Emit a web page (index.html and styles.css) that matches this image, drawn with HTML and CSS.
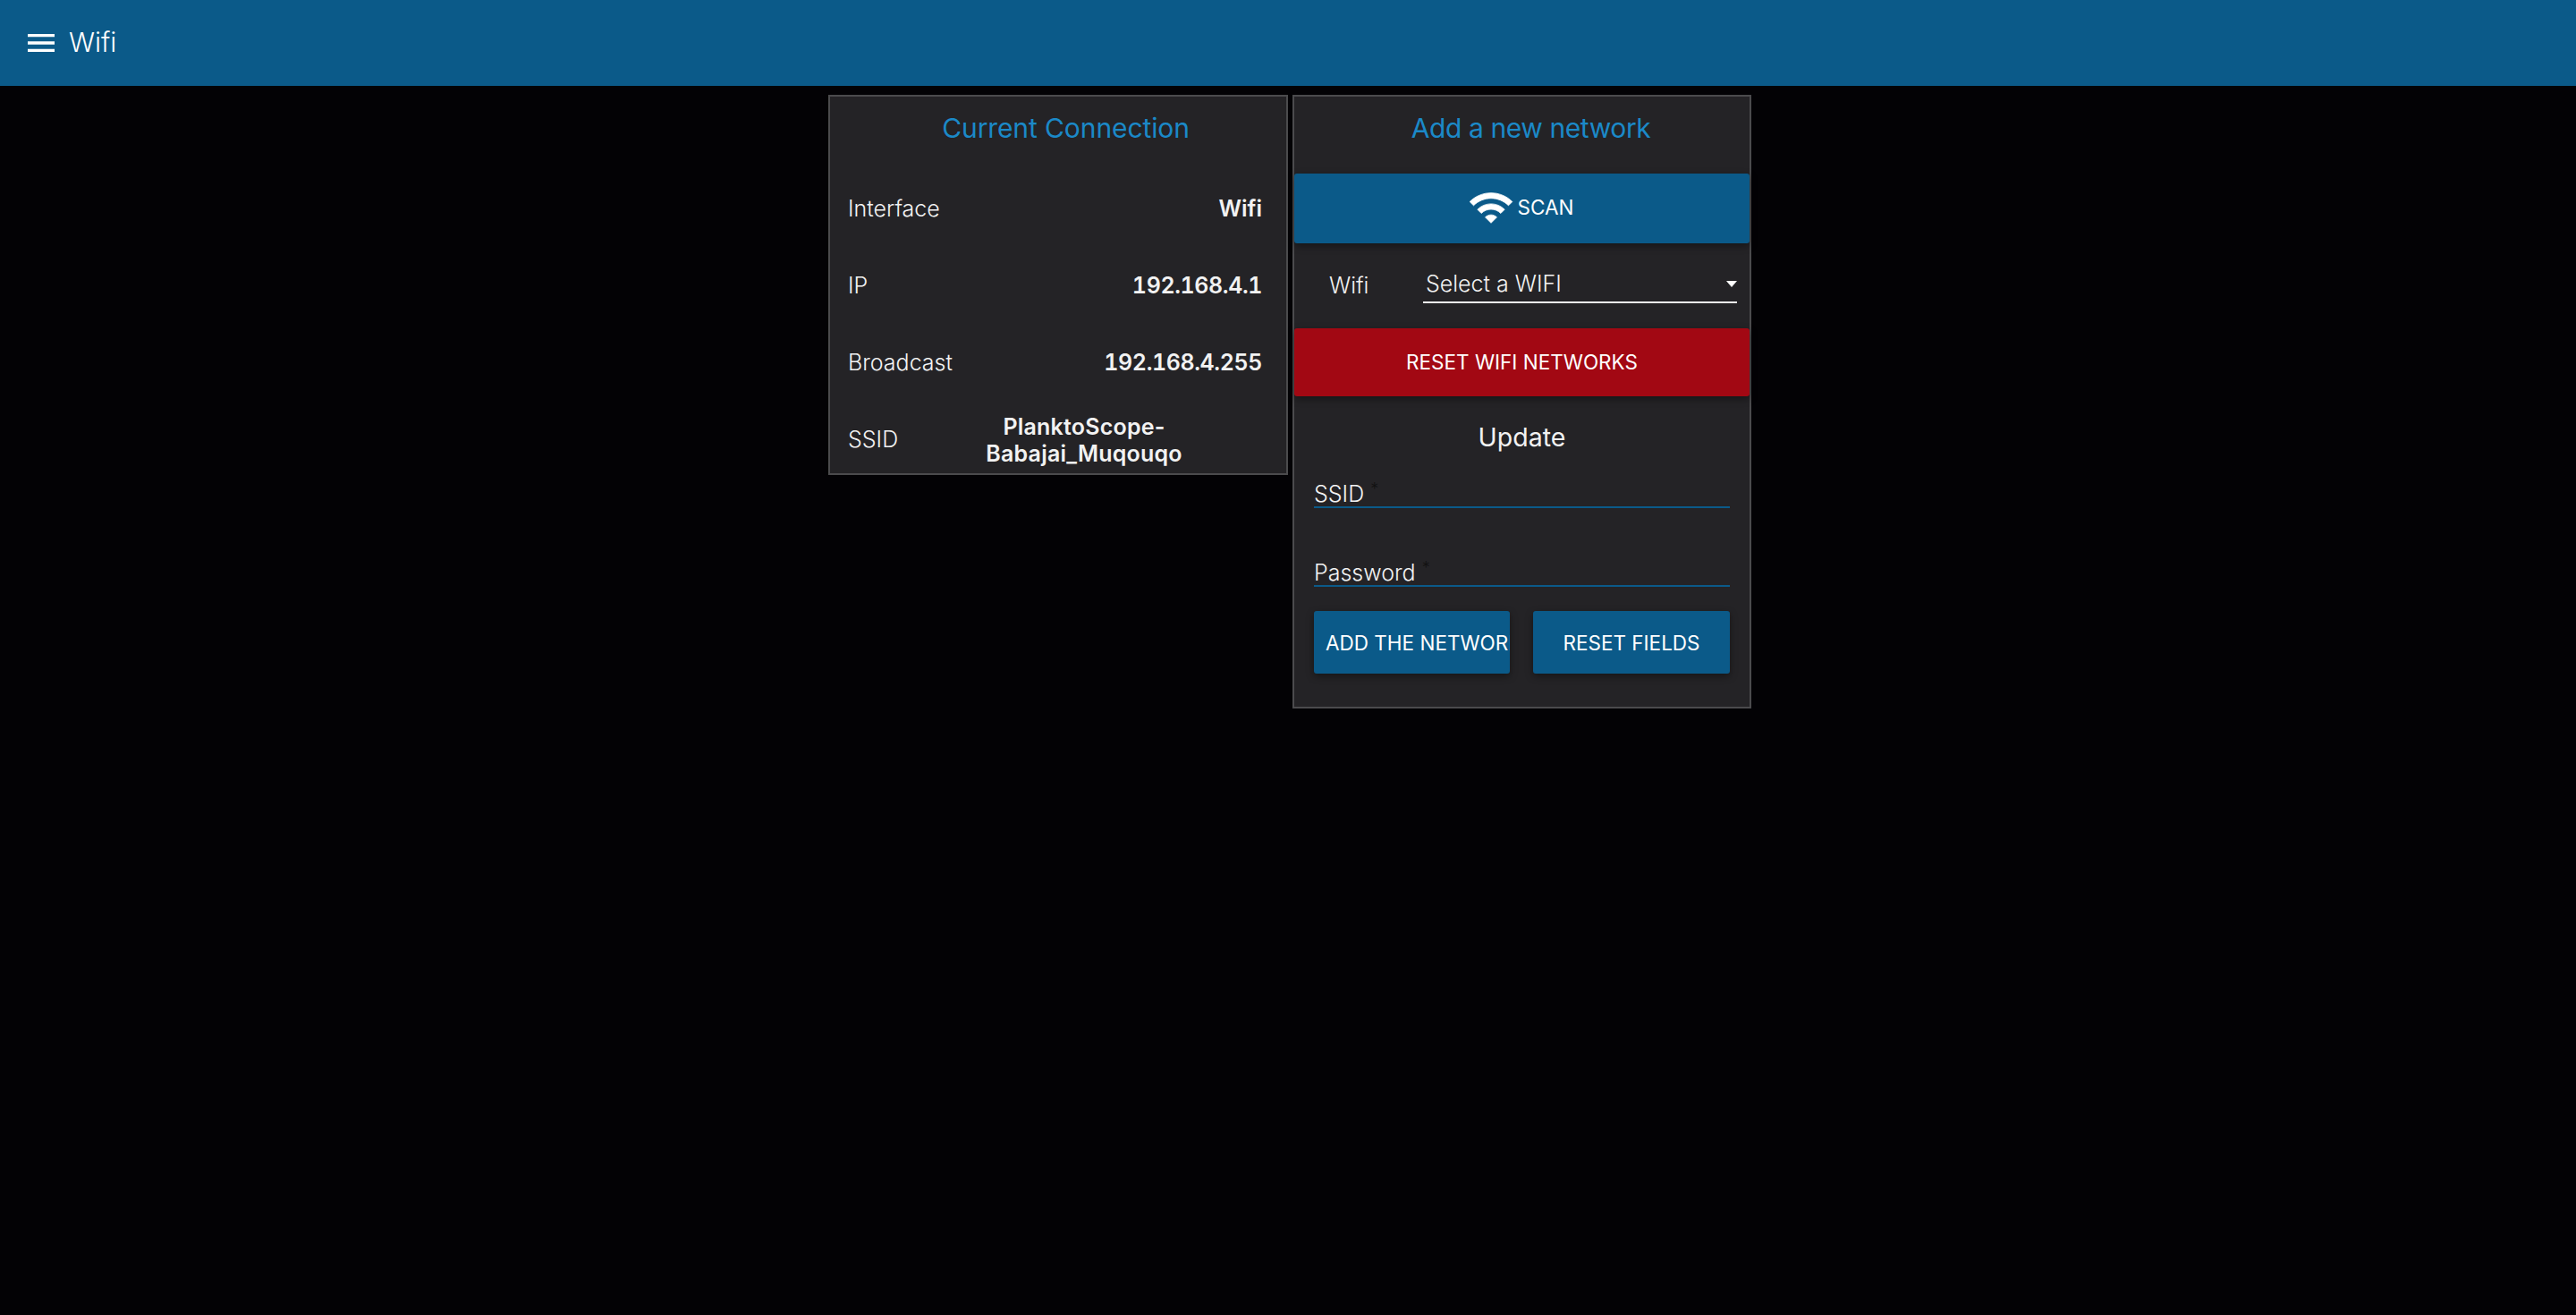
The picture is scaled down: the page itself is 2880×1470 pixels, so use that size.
FILE: index.html
```html
<!DOCTYPE html>
<html lang="en">
<head>
    <meta charset="UTF-8">
    <title>Wifi</title>
    <link rel="stylesheet" href="styles.css">
</head>
<body>
    <header class="toolbar">
        <svg class="menu-icon" viewBox="0 0 24 24"><path d="M3 18h18v-2H3v2zm0-5h18v-2H3v2zm0-7v2h18V6H3z"/></svg>
        <div class="toolbar-title">Wifi</div>
    </header>
    <main class="page">
        <section class="card card-current">
            <h2 class="card-title card-title-current">Current Connection</h2>
            <div class="row"><span>Interface</span><b>Wifi</b></div>
            <div class="row"><span>IP</span><b class="num-value">192.168.4.1</b></div>
            <div class="row"><span>Broadcast</span><b class="num-value">192.168.4.255</b></div>
            <div class="row"><span>SSID</span><b class="ssid-value">PlanktoScope-Babajai_Muqouqo</b></div>
        </section>
        <section class="card card-add">
            <h2 class="card-title card-title-add">Add a new network</h2>
            <button class="btn btn-wide btn-scan" type="button">
                <svg class="wifi-icon" viewBox="0 0 24 24"><path d="M1 9l2 2c4.97-4.97 13.03-4.97 18 0l2-2C16.93 2.93 7.08 2.93 1 9zm8 8l3 3 3-3c-1.65-1.66-4.34-1.66-6 0zm-4-4l2 2c2.76-2.76 7.24-2.76 10 0l2-2C15.14 9.14 8.87 9.14 5 13z"/></svg>
                <span>Scan</span>
            </button>
            <div class="select-row">
                <span class="select-label">Wifi</span>
                <div class="select-box">Select a WIFI<i class="caret"></i></div>
            </div>
            <button class="btn btn-wide btn-danger" type="button">Reset wifi networks</button>
            <h3 class="update-title">Update</h3>
            <form class="update-form">
                <div class="field">SSID <em>*</em></div>
                <div class="field field-next">Password <em>*</em></div>
                <div class="form-actions">
                    <button class="btn btn-add" type="button">Add the network</button>
                    <button class="btn btn-reset" type="button">Reset fields</button>
                </div>
            </form>
        </section>
    </main>
</body>
</html>
```

FILE: styles.css
```css
* {
    box-sizing: border-box;
}
body {
    margin: 0;
    background-color: #030205;
    color: #f2f2f2;
    font-family: Inter, "Liberation Sans", sans-serif;
    font-size: 25px;
}
.toolbar {
    display: flex;
    align-items: center;
    height: 96px;
    padding-left: 26px;
    background-color: #0b5a89;
    color: #fff;
}
.menu-icon {
    width: 40px;
    height: 40px;
    fill: #fff;
}
.toolbar-title {
    margin: 0 0 3px 11px;
    font-size: 30px;
    font-weight: 300;
}
.page {
    display: flex;
    align-items: flex-start;
    gap: 5px;
    padding: 10px 0 0 926px;
}
.card {
    flex: none;
    width: 513px;
    border: 2px solid #4b4b4d;
    background-color: #242326;
}
.card-current {
    width: 514px;
    height: 425px;
    overflow: hidden;
}
.card-add {
    height: 686px;
}
.card-title {
    margin: 0;
    padding-top: 17px;
    height: 86px;
    color: #1b89c8;
    font-size: 30px;
    font-weight: 400;
    line-height: 36px;
    text-align: center;
}
.card-title-current {
    padding-left: 17px;
    letter-spacing: -0.1px;
}
.card-title-add {
    padding-left: 20px;
    letter-spacing: -0.4px;
}
.card-current .card-title {
    height: 82px;
}
.row {
    display: flex;
    align-items: center;
    justify-content: space-between;
    height: 86px;
    padding: 0 27px 0 20px;
    font-weight: 300;
}
.row b {
    font-weight: 600;
    text-align: right;
}
.row .num-value {
    font-variant-numeric: tabular-nums;
    letter-spacing: -0.4px;
}
.row .ssid-value {
    width: 240px;
    margin-right: 79px;
    padding-top: 1px;
    letter-spacing: 0.2px;
    line-height: 30px;
    text-align: center;
}
.btn {
    border: 0;
    border-radius: 3px;
    background-color: #0b5a89;
    color: #fff;
    font-family: inherit;
    font-size: 22.5px;
    font-weight: 400;
    text-transform: uppercase;
    white-space: nowrap;
    box-shadow: 0 3px 8px rgba(0, 0, 0, 0.4);
}
.btn-wide {
    display: flex;
    align-items: center;
    justify-content: center;
    width: 100%;
}
.btn-scan {
    height: 78px;
    gap: 4px;
    padding: 0 3px 3px 0;
}
.wifi-icon {
    width: 52px;
    height: 52px;
    fill: #fff;
    stroke: #fff;
    stroke-width: 0.35;
    stroke-linejoin: round;
}
.select-row {
    display: flex;
    align-items: flex-end;
    height: 95px;
    padding: 0 14px 28px 39px;
    font-weight: 300;
}
.select-label {
    width: 105px;
    padding-bottom: 5px;
}
.select-box {
    display: flex;
    align-items: center;
    flex: 1;
    justify-content: space-between;
    height: 44px;
    padding: 2px 0 0 3px;
    border-bottom: 2px solid #f2f2f2;
}
.caret {
    border: 6px solid transparent;
    border-top: 7px solid #fff;
    border-bottom: 0;
}
.btn-danger {
    height: 76px;
    padding-bottom: 2px;
    background-color: #a20813;
}
.update-title {
    margin: 0;
    padding-top: 29px;
    height: 90px;
    font-size: 28.5px;
    font-weight: 400;
    line-height: 34px;
    text-align: center;
}
.update-form {
    padding: 0 22px;
}
.field {
    height: 35px;
    border-bottom: 2px solid #0b5a89;
    font-weight: 300;
    line-height: 28px;
}
.field-next {
    margin-top: 53px;
}
.field em {
    color: #111;
    font-size: 18px;
    font-style: normal;
    vertical-align: 8px;
}
.form-actions {
    display: flex;
    justify-content: space-between;
    margin-top: 27px;
}
.btn-add,
.btn-reset {
    height: 70px;
    padding-top: 2px;
    overflow: hidden;
}
.btn-add {
    width: 219px;
    padding-left: 13px;
    padding-right: 0;
    text-align: left;
}
.btn-reset {
    width: 220px;
    padding-left: 0;
    padding-right: 0;
}
```
